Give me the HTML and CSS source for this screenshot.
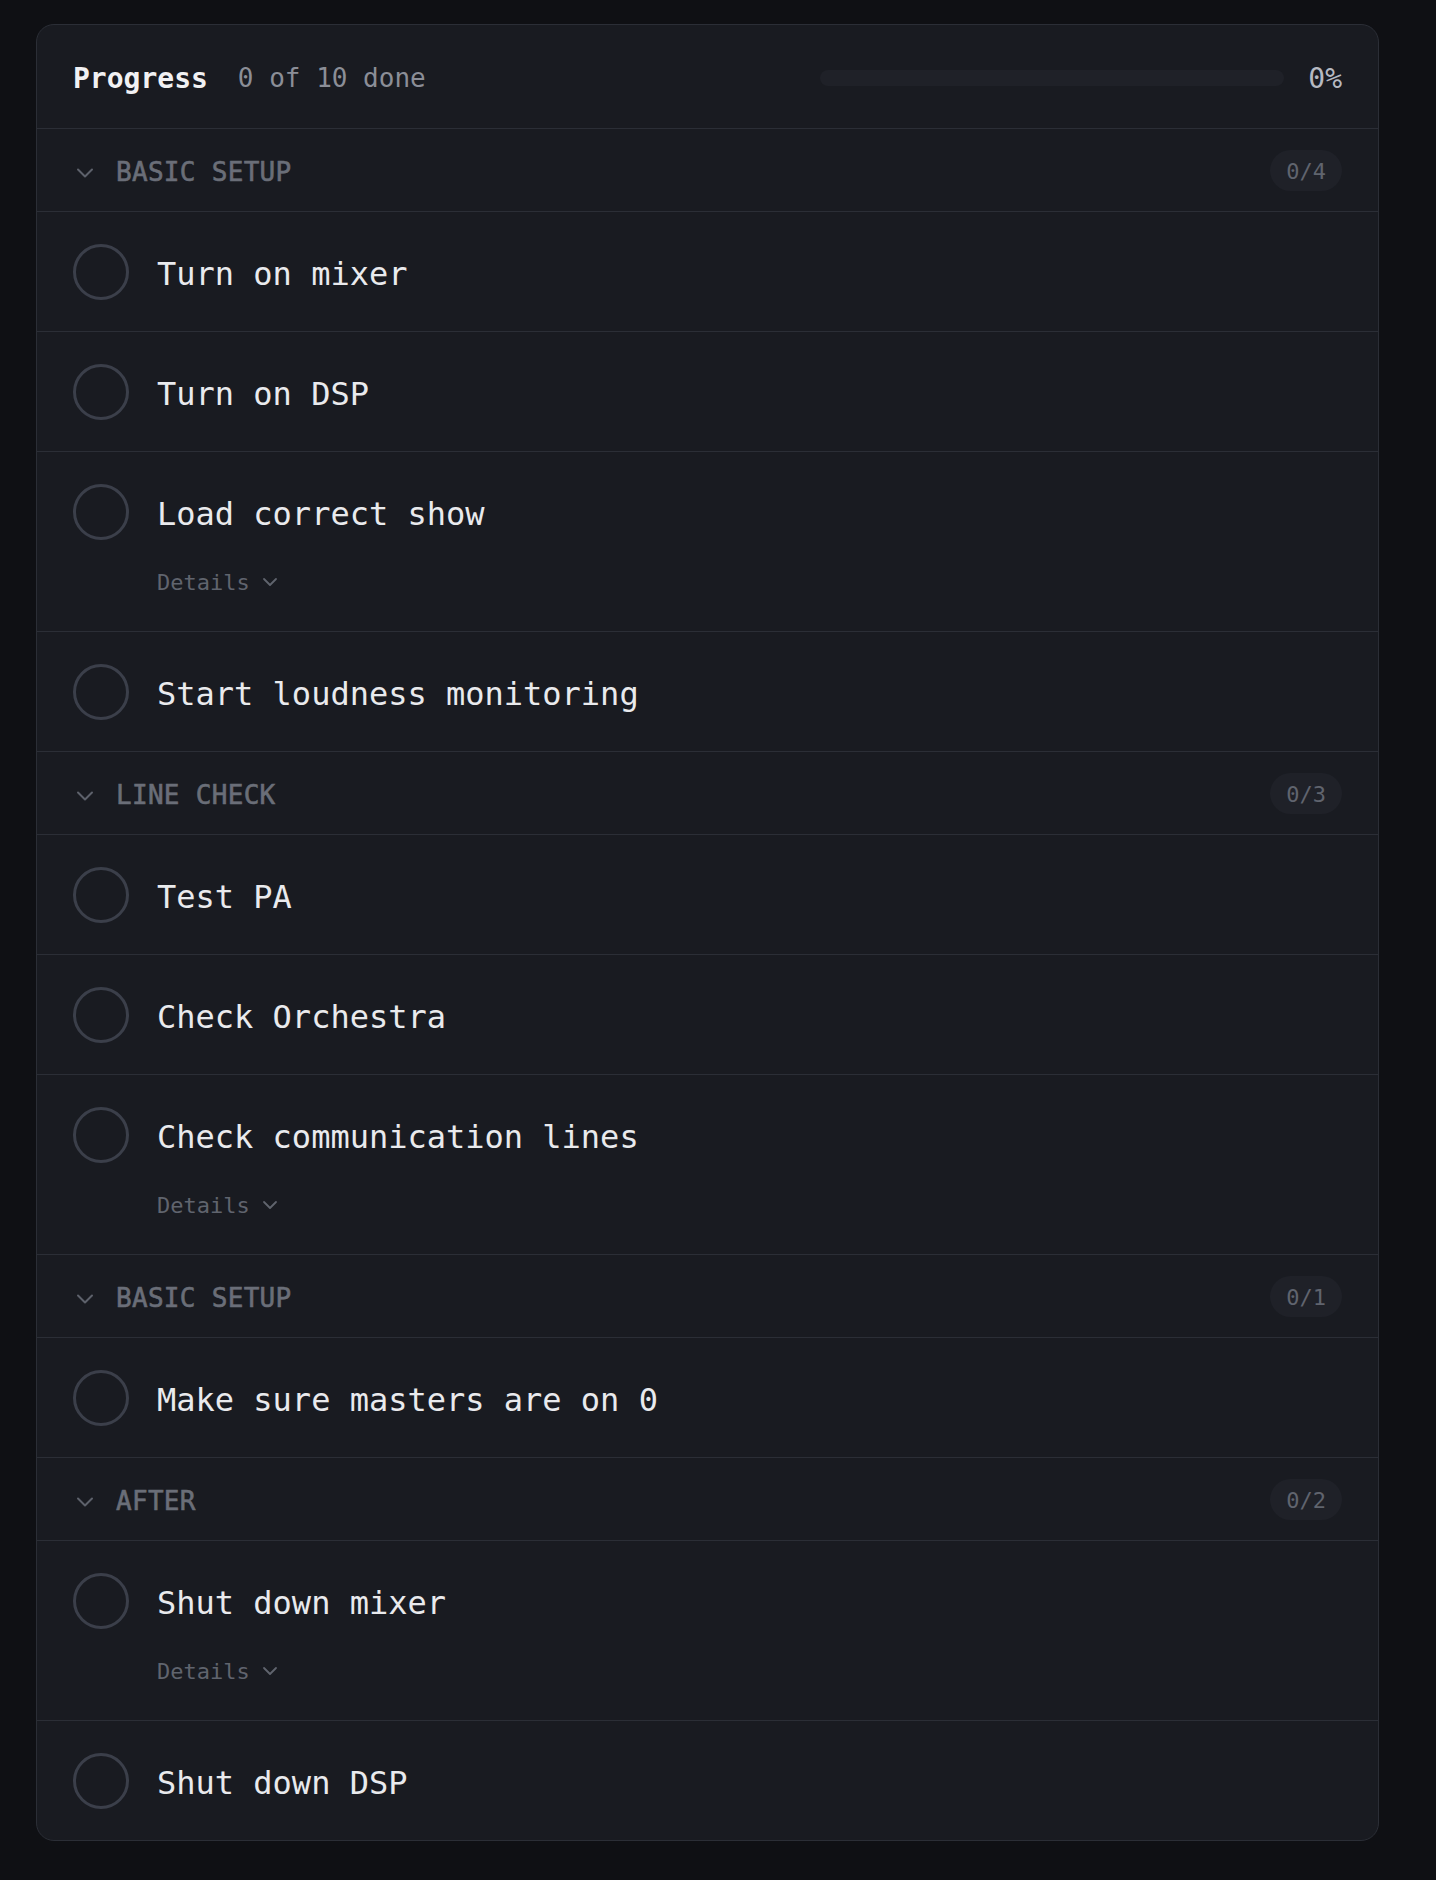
FILE: index.html
```html
<!DOCTYPE html>
<html lang="en">
<head>
<meta charset="utf-8">
<title>Checklist</title>
<link rel="stylesheet" href="styles.css">
</head>
<body>
<div class="card">
  <div class="header">
    <span class="h-title">Progress</span>
    <span class="h-count">0 of 10 done</span>
    <div class="bar"><div class="bar-fill" style="width:0%"></div></div>
    <span class="h-pct">0%</span>
  </div>

  <div class="section">
    <svg class="sec-chev" viewBox="0 0 24 24"><path d="M5 11.5 L12 18.5 L19 11.5"/></svg>
    <span class="sec-title">BASIC SETUP</span>
    <span class="badge">0/4</span>
  </div>
  <div class="item"><span class="check"></span><div class="content"><div class="title">Turn on mixer</div></div></div>
  <div class="item"><span class="check"></span><div class="content"><div class="title">Turn on DSP</div></div></div>
  <div class="item details-item"><span class="check"></span><div class="content"><div class="title">Load correct show</div><div class="details">Details<svg class="det-chev" viewBox="0 0 16 16"><path d="M2 5 L8 11 L14 5"/></svg></div></div></div>
  <div class="item"><span class="check"></span><div class="content"><div class="title">Start loudness monitoring</div></div></div>

  <div class="section">
    <svg class="sec-chev" viewBox="0 0 24 24"><path d="M5 11.5 L12 18.5 L19 11.5"/></svg>
    <span class="sec-title">LINE CHECK</span>
    <span class="badge">0/3</span>
  </div>
  <div class="item"><span class="check"></span><div class="content"><div class="title">Test PA</div></div></div>
  <div class="item"><span class="check"></span><div class="content"><div class="title">Check Orchestra</div></div></div>
  <div class="item details-item"><span class="check"></span><div class="content"><div class="title">Check communication lines</div><div class="details">Details<svg class="det-chev" viewBox="0 0 16 16"><path d="M2 5 L8 11 L14 5"/></svg></div></div></div>

  <div class="section">
    <svg class="sec-chev" viewBox="0 0 24 24"><path d="M5 11.5 L12 18.5 L19 11.5"/></svg>
    <span class="sec-title">BASIC SETUP</span>
    <span class="badge">0/1</span>
  </div>
  <div class="item"><span class="check"></span><div class="content"><div class="title">Make sure masters are on 0</div></div></div>

  <div class="section">
    <svg class="sec-chev" viewBox="0 0 24 24"><path d="M5 11.5 L12 18.5 L19 11.5"/></svg>
    <span class="sec-title">AFTER</span>
    <span class="badge">0/2</span>
  </div>
  <div class="item details-item"><span class="check"></span><div class="content"><div class="title">Shut down mixer</div><div class="details">Details<svg class="det-chev" viewBox="0 0 16 16"><path d="M2 5 L8 11 L14 5"/></svg></div></div></div>
  <div class="item last"><span class="check"></span><div class="content"><div class="title">Shut down DSP</div></div></div>
</div>
</body>
</html>
```

FILE: styles.css
```css
* { box-sizing: border-box; }

html, body {
  margin: 0;
  background: #0f1014;
}

body {
  padding: 24px 0 0 36px;
  font-family: "DejaVu Sans Mono", "Liberation Mono", monospace;
  color: #e8e9ec;
}

.card {
  width: 1343px;
  background: #191b21;
  border: 1px solid #2b2e36;
  border-radius: 18px;
  overflow: hidden;
}

.header {
  display: flex;
  align-items: center;
  height: 104px;
  padding: 3px 36px 0;
  border-bottom: 1px solid #2b2e36;
}

.h-title {
  font-size: 28px;
  font-weight: bold;
  color: #f1f1f3;
}

.h-count {
  margin-left: 30px;
  font-size: 26px;
  color: #8b8e97;
}

.bar {
  margin-left: auto;
  width: 464px;
  height: 16px;
  border-radius: 8px;
  background: #1f2128;
  overflow: hidden;
}

.bar-fill {
  height: 100%;
  background: #6b8afd;
}

.h-pct {
  margin-left: 24px;
  font-size: 28px;
  color: #b6b9c1;
}

.section {
  display: flex;
  align-items: center;
  height: 83px;
  padding: 3px 36px 0;
  border-bottom: 1px solid #2b2e36;
}

.sec-chev {
  width: 24px;
  height: 24px;
  margin-top: -3px;
  fill: none;
  stroke: #5d616b;
  stroke-width: 2;
  stroke-linecap: round;
  stroke-linejoin: round;
}

.sec-title {
  margin-left: 19px;
  font-size: 26px;
  font-weight: normal;
  -webkit-text-stroke: 0.6px #6a6e78;
  letter-spacing: 0.3px;
  color: #6a6e78;
}

.badge {
  margin-left: auto;
  margin-top: -3px;
  height: 41px;
  line-height: 43px;
  padding: 0 16px;
  border-radius: 21px;
  background: #1f2128;
  font-size: 22px;
  color: #60646e;
}

.item {
  display: flex;
  align-items: flex-start;
  gap: 28px;
  padding: 32px 36px 31px;
  border-bottom: 1px solid #2b2e36;
}

.item.last {
  border-bottom: none;
}

.check {
  flex: none;
  width: 56px;
  height: 56px;
  border: 3px solid #3b3f4a;
  border-radius: 50%;
}

.title {
  padding-top: 4px;
  font-size: 32px;
  line-height: 52px;
  color: #e9eaed;
}

.details {
  display: flex;
  align-items: center;
  margin-top: 22px;
  padding-top: 3px;
  height: 38px;
  font-size: 22px;
  color: #60646e;
}

.det-chev {
  width: 16px;
  height: 16px;
  margin-left: 12px;
  margin-top: -1px;
  fill: none;
  stroke: #60646e;
  stroke-width: 1.8;
  stroke-linecap: round;
  stroke-linejoin: round;
}
```
